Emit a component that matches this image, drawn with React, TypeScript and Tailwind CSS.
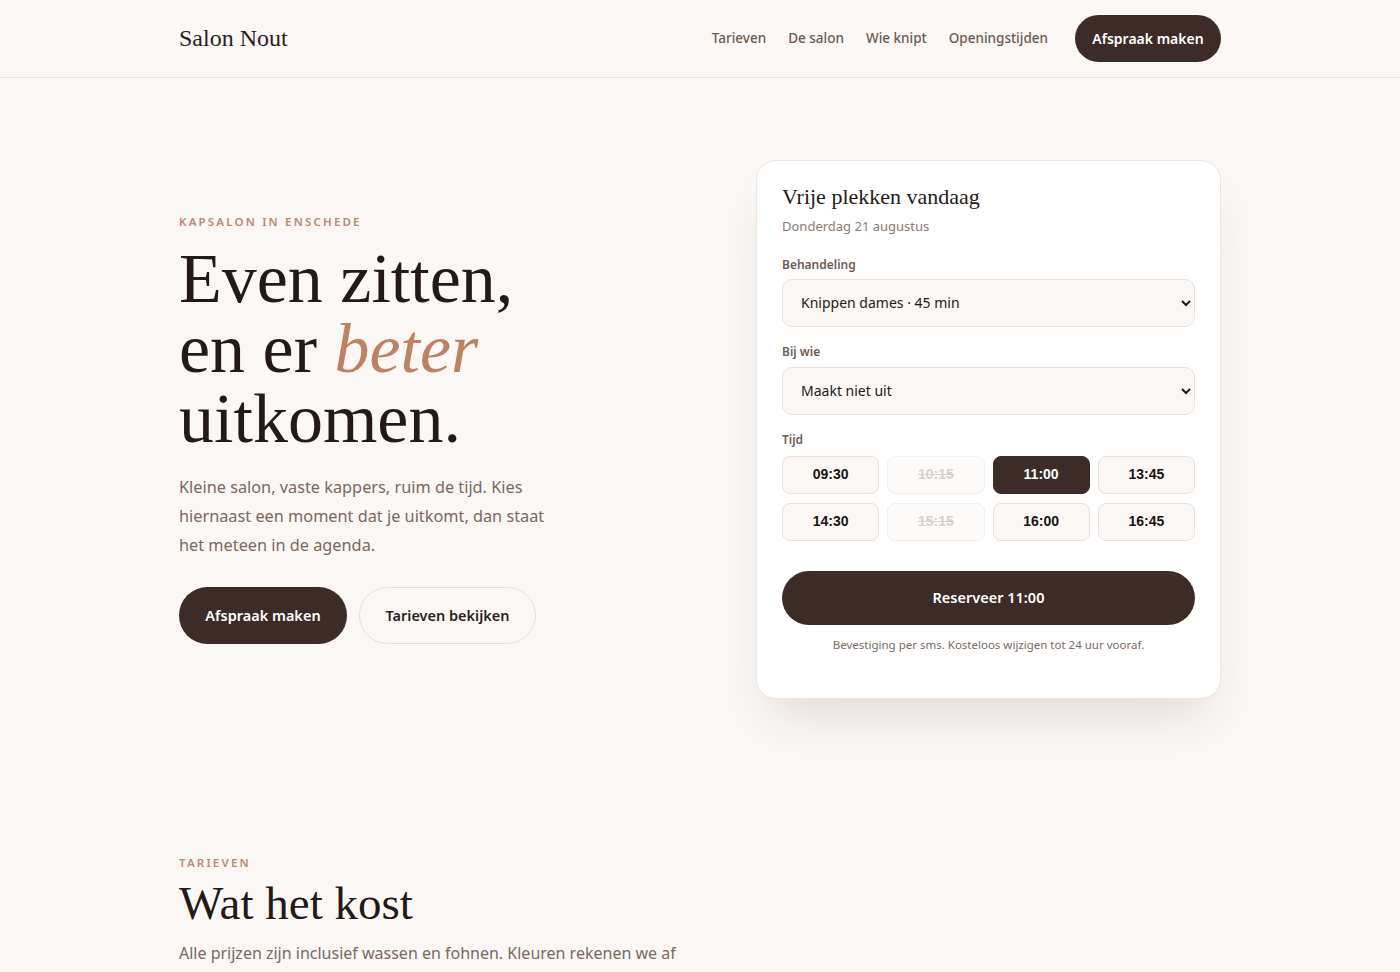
import { useState } from "react";

const times = [
    { t: "09:30", free: true },
    { t: "10:15", free: false },
    { t: "11:00", free: true },
    { t: "13:45", free: true },
    { t: "14:30", free: true },
    { t: "15:15", free: false },
    { t: "16:00", free: true },
    { t: "16:45", free: true },
];

const serif = "font-['Liberation_Serif',Georgia,serif]";

export default function App() {
    const [picked, setPicked] = useState("11:00");

    return (
        <div className="min-h-screen bg-[#fbf7f4] text-[#2b1f1c] font-['Noto_Sans',sans-serif]">
            {/* HEADER */}
            <header className="border-b border-[#eee2dc]">
                <div className="max-w-[1042px] mx-auto h-[77px] flex items-center justify-between">
                    <a className={`${serif} text-[24px] text-[#2b1f1c] -mt-[2px]`}>Salon Nout</a>
                    <nav className="flex items-center gap-[22px] text-[13.5px] font-medium text-[#6b5a53]">
                        <a>Tarieven</a>
                        <a>De salon</a>
                        <a>Wie knipt</a>
                        <a>Openingstijden</a>
                        <button className="ml-[5px] h-[47px] w-[146px] rounded-full bg-[#3d2b27] text-white font-semibold text-[14px]">
                            Afspraak maken
                        </button>
                    </nav>
                </div>
            </header>

            {/* HERO */}
            <section className="max-w-[1042px] mx-auto pt-[82px] pb-[156px] flex items-center justify-between">
                <div>
                    <p className="text-[11.5px] font-semibold tracking-[0.19em] text-[#b98a73] uppercase leading-4">
                        Kapsalon in Enschede
                    </p>
                    <h1 className={`${serif} mt-[14px] text-[70px] leading-[70px] text-[#231a17]`}>
                        Even zitten,
                        <br />
                        en er <em className="text-[#bd8167]">beter</em>
                        <br />
                        uitkomen.
                    </h1>
                    <p className="mt-[19px] max-w-[380px] text-[16.3px] leading-[29px] text-[#7a6861]">
                        Kleine salon, vaste kappers, ruim de tijd. Kies hiernaast een moment dat je uitkomt, dan staat het meteen in de agenda.
                    </p>
                    <div className="mt-[27px] flex gap-3">
                        <button className="h-[57px] w-[168px] rounded-full bg-[#3d2b27] text-white font-semibold text-[14.5px]">
                            Afspraak maken
                        </button>
                        <button className="h-[57px] w-[177px] rounded-full border border-[#eadfd8] text-[#2b1f1c] font-semibold text-[14.5px]">
                            Tarieven bekijken
                        </button>
                    </div>
                </div>

                {/* BOOKING CARD */}
                <div className="w-[465px] bg-white rounded-[20px] border border-[#efe5df] shadow-[0_28px_50px_-18px_rgba(61,43,39,0.16)] px-[25px] pt-[23px] pb-[45px]">
                    <h3 className={`${serif} text-[22px] leading-[26px] text-[#231a17]`}>Vrije plekken vandaag</h3>
                    <p className="mt-[7px] text-[13px] text-[#8a7a73]">Donderdag 21 augustus</p>

                    <label className="block mt-[19px] text-[12px] font-semibold text-[#6e5d56]">Behandeling</label>
                    <select className="mt-[5px] w-full h-[48px] pl-[14px] pr-[6px] rounded-[10px] bg-[#fbf7f4] border border-[#ebe0d9] text-[14px] text-[#231a17]">
                        <option>Knippen dames · 45 min</option>
                        <option>Knippen heren · 30 min</option>
                        <option>Kleuren · 90 min</option>
                    </select>

                    <label className="block mt-[16px] text-[12px] font-semibold text-[#6e5d56]">Bij wie</label>
                    <select className="mt-[6px] w-full h-[48px] pl-[14px] pr-[6px] rounded-[10px] bg-[#fbf7f4] border border-[#ebe0d9] text-[14px] text-[#231a17]">
                        <option>Maakt niet uit</option>
                        <option>Anouk</option>
                        <option>Mark</option>
                    </select>

                    <label className="block mt-[16px] text-[12px] font-semibold text-[#6e5d56]">Tijd</label>
                    <div className="mt-[7px] grid grid-cols-4 gap-x-[8px] gap-y-[9px]">
                        {times.map((s) => {
                            const on = s.t === picked;
                            return (
                                <button
                                    key={s.t}
                                    disabled={!s.free}
                                    onClick={() => setPicked(s.t)}
                                    className={`h-[38px] rounded-[8px] border font-['Liberation_Sans',Arial,sans-serif] font-bold text-[14px] ${
                                        !s.free
                                            ? "bg-[#fdfbfa] border-[#f5efeb] text-[#dccfc9] line-through"
                                            : on
                                            ? "bg-[#3d2b27] border-[#3d2b27] text-white"
                                            : "bg-[#fbf7f4] border-[#ebe0d9] text-[#1a1311]"
                                    }`}
                                >
                                    {s.t}
                                </button>
                            );
                        })}
                    </div>

                    <button className="mt-[30px] w-full h-[54px] rounded-full bg-[#3d2b27] text-white font-semibold text-[14.5px]">
                        Reserveer {picked}
                    </button>
                    <p className="mt-[11px] text-center text-[11.5px] text-[#7a6861]">
                        Bevestiging per sms. Kosteloos wijzigen tot 24 uur vooraf.
                    </p>
                </div>
            </section>

            {/* TARIEVEN */}
            <section className="max-w-[1042px] mx-auto pb-20">
                <p className="text-[11.5px] font-semibold tracking-[0.19em] text-[#b98a73] uppercase leading-4">Tarieven</p>
                <h2 className={`${serif} mt-[6px] text-[47px] leading-[52px] text-[#231a17]`}>Wat het kost</h2>
                <p className="mt-[10px] max-w-[520px] text-[16px] leading-[29px] text-[#7a6861]">
                    Alle prijzen zijn inclusief wassen en fohnen. Kleuren rekenen we af op basis van lengte en dikte van je haar.
                </p>
            </section>
        </div>
    );
}
